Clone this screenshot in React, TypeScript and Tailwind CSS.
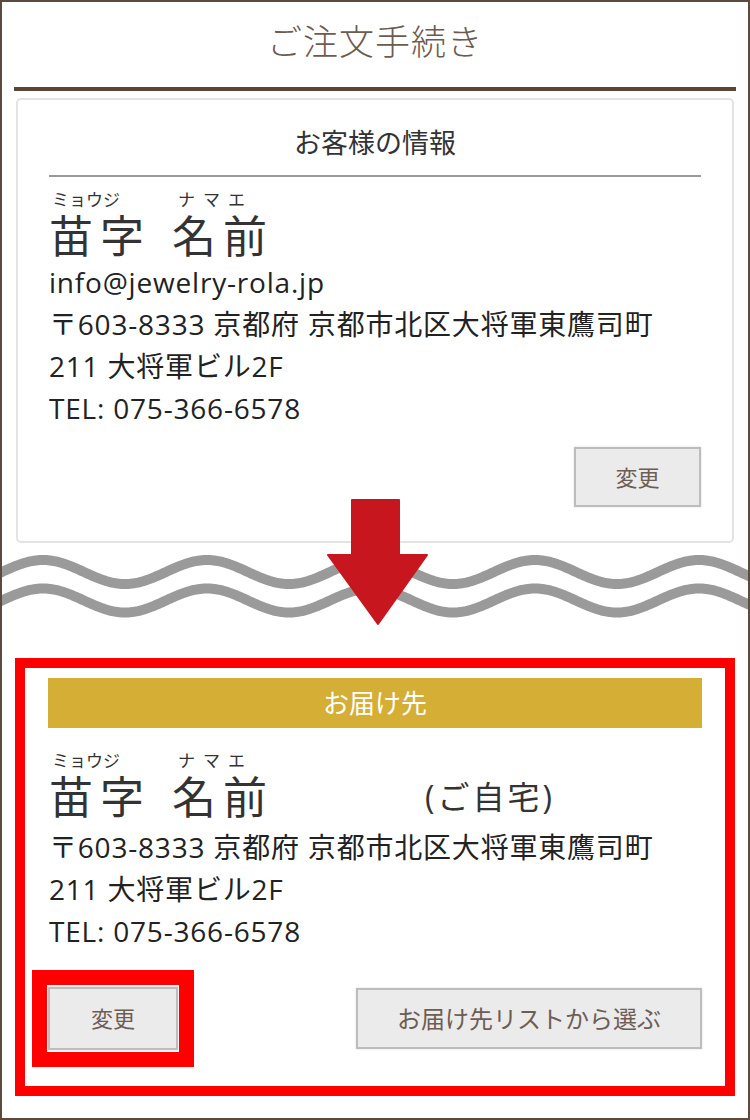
import React from "react";

// sine-ish wave across the whole width, crest (top) first at x = crest
const wavePath = (mid: number, amp = 12, period = 164, crest = 41) => {
  let d = "";
  for (let x = -6; x <= 752; x += 2) {
    const y = mid - amp * Math.cos(((x - crest) / period) * Math.PI * 2);
    d += `${x === -6 ? "M" : "L"}${x} ${y.toFixed(2)} `;
  }
  return d;
};

function NameBlock({ suffix, className = "" }: { suffix?: string; className?: string }) {
  return (
    <div className={`flex flex-col text-[#333] ${className}`}>
      {/* furigana */}
      <div className="flex h-[20px] items-center text-[17px] leading-[20px]">
        <span className="ml-[3px] w-[126px]">ミョウジ</span>
        <span className="tracking-[8px]">ナマエ</span>
      </div>
      <div className="mt-[3px] flex h-[46px] items-center text-[44px] leading-[46px]">
        <span className="tracking-[7px]">苗字</span>
        <span className="ml-[21px] tracking-[7px]">名前</span>
        {suffix && (
          <span className="ml-[151px] text-[32px] tracking-[3px]">{suffix}</span>
        )}
      </div>
    </div>
  );
}

function GrayButton({ label, className = "" }: { label: string; className?: string }) {
  return (
    <button
      type="button"
      className={`flex shrink-0 items-center justify-center bg-[#ebebeb] border-2 border-[#bdbdbd] shadow-[0_0_2px_rgba(0,0,0,0.15)] text-[#6d5d54] ${className}`}
    >
      {label}
    </button>
  );
}

export default function App() {
  return (
    <div className="w-[750px] h-[1120px] border-2 border-[#5c4a3f] bg-white flex flex-col font-[family-name:'Open_Sans','Noto_Sans_CJK_JP',sans-serif] text-[#222]">
      {/* title */}
      <header className="h-[85px] shrink-0 flex items-center justify-center pb-[5px]">
        <h1 className="text-[35px] font-light text-[#6e5b50] tracking-[1px]">ご注文手続き</h1>
      </header>
      <div className="mx-3 h-[4px] shrink-0 bg-[#5b4535]" />

      {/* before: customer info card */}
      <section className="mx-[14px] mt-[7px] shrink-0 border-2 border-[#e3e3e3] rounded-[5px] px-[31px] pt-[24px] pb-[34px] flex flex-col">
        <h2 className="text-center text-[27px] leading-[38px] text-[#333]">お客様の情報</h2>
        <div className="mt-[13px] h-[2px] bg-[#999]" />
        <NameBlock className="mt-[13px]" />
        <div className="mt-[2px] text-[28px] leading-[42px] tracking-[0.8px]">
          <p>info@jewelry-rola.jp</p>
          <p>〒603-8333 京都府 京都市北区大将軍東鷹司町</p>
          <p>211 大将軍ビル2F</p>
          <p>TEL: 075-366-6578</p>
        </div>
        <GrayButton label="変更" className="self-end mt-[18px] w-[127px] h-[60px] text-[22px]" />
      </section>

      {/* waves + arrow */}
      <div className="relative h-[115px] shrink-0">
        <svg width="746" height="115" className="block">
          <path d={wavePath(29)} fill="none" stroke="#9a9a9a" strokeWidth="10" />
          <path d={wavePath(57.5)} fill="none" stroke="#9a9a9a" strokeWidth="10" />
        </svg>
        <svg width="104" height="128" className="absolute left-[322px] top-[-44px]">
          <polygon
            points="28,1 75,1 75,56 103,56 54,125 4,56 28,56"
            fill="#c8161e"
            stroke="#c8161e"
            strokeWidth="2"
            strokeLinejoin="round"
          />
        </svg>
      </div>

      {/* after: delivery address */}
      <section className="mx-[13px] shrink-0 border-[10px] border-[#ff0000] pt-[10px] pb-[19px] flex flex-col">
        <div className="mx-[23px] h-[50px] bg-[#d4ae35] flex items-center justify-center text-white text-[26px]">
          お届け先
        </div>
        <div className="px-[24px] flex flex-col">
          <NameBlock suffix="(ご自宅)" className="mt-[23px]" />
          <div className="mt-[6px] text-[28px] leading-[42px] tracking-[0.8px]">
            <p>〒603-8333 京都府 京都市北区大将軍東鷹司町</p>
            <p>211 大将軍ビル2F</p>
            <p>TEL: 075-366-6578</p>
          </div>
        </div>
        <div className="mt-[18px] pl-[7px] pr-[23px] flex items-center justify-between">
          <div className="border-[15px] border-[#ff0000] px-[1px] py-[2px] bg-white">
            <GrayButton label="変更" className="w-[130px] h-[63px] text-[22px]" />
          </div>
          <GrayButton label="お届け先リストから選ぶ" className="w-[346px] h-[61px] text-[24px]" />
        </div>
      </section>
    </div>
  );
}
